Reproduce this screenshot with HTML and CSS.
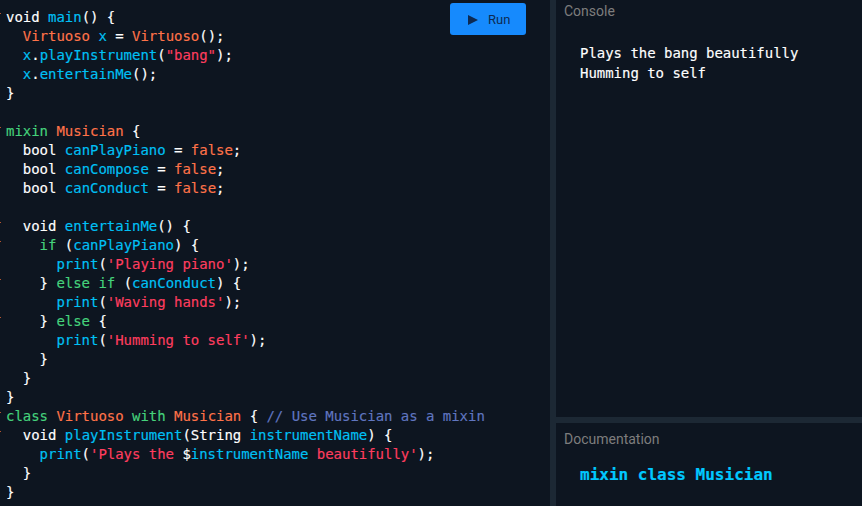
FILE: index.html
```html
<!DOCTYPE html>
<html lang="en">
<head>
<meta charset="utf-8">
<title>DartPad</title>
<link rel="stylesheet" href="styles.css">
</head>
<body>
<main class="app">
<section class="editor">
<button class="run" type="button"><svg class="run-icon" viewBox="0 0 10 10" width="10" height="10"><path d="M0 0L10 5L0 10Z"/></svg><span>Run</span></button>
<pre class="code"><code><span class="tick"></span><span class="w">void</span> <span class="f">main</span><span class="w">() {</span>
  <span class="t">Virtuoso</span> <span class="f">x</span> <span class="w">=</span> <span class="t">Virtuoso</span><span class="w">();</span>
  <span class="f">x</span><span class="w">.</span><span class="f">playInstrument</span><span class="w">(</span><span class="s">"bang"</span><span class="w">);</span>
  <span class="f">x</span><span class="w">.</span><span class="f">entertainMe</span><span class="w">();</span>
<span class="w">}</span>

<span class="tick"></span><span class="k">mixin</span> <span class="t">Musician</span> <span class="w">{</span>
  <span class="w">bool</span> <span class="f">canPlayPiano</span> <span class="w">=</span> <span class="t">false</span><span class="w">;</span>
  <span class="w">bool</span> <span class="f">canCompose</span> <span class="w">=</span> <span class="t">false</span><span class="w">;</span>
  <span class="w">bool</span> <span class="f">canConduct</span> <span class="w">=</span> <span class="t">false</span><span class="w">;</span>

<span class="tick"></span>  <span class="w">void</span> <span class="f">entertainMe</span><span class="w">() {</span>
<span class="tick"></span>    <span class="k">if</span> <span class="w">(</span><span class="f">canPlayPiano</span><span class="w">) {</span>
      <span class="f">print</span><span class="w">(</span><span class="s">'Playing piano'</span><span class="w">);</span>
<span class="tick"></span>    <span class="w">}</span> <span class="k">else if</span> <span class="w">(</span><span class="f">canConduct</span><span class="w">) {</span>
      <span class="f">print</span><span class="w">(</span><span class="s">'Waving hands'</span><span class="w">);</span>
<span class="tick"></span>    <span class="w">}</span> <span class="k">else</span> <span class="w">{</span>
      <span class="f">print</span><span class="w">(</span><span class="s">'Humming to self'</span><span class="w">);</span>
    <span class="w">}</span>
  <span class="w">}</span>
<span class="w">}</span>
<span class="tick"></span><span class="k">class</span> <span class="t">Virtuoso</span> <span class="k">with</span> <span class="t">Musician</span> <span class="w">{</span> <span class="c">// Use Musician as a mixin</span>
<span class="tick"></span>  <span class="w">void</span> <span class="f">playInstrument</span><span class="w">(String</span> <span class="f">instrumentName</span><span class="w">) {</span>
    <span class="f">print</span><span class="w">(</span><span class="s">'Plays the </span><span class="w">$</span><span class="f">instrumentName</span> <span class="s">beautifully'</span><span class="w">);</span>
  <span class="w">}</span>
<span class="w">}</span></code></pre>
</section>
<div class="vsplit"></div>
<aside class="side">
<section class="console">
<h2 class="label">Console</h2>
<pre class="output">Plays the bang beautifully
Humming to self</pre>
</section>
<div class="hsplit"></div>
<section class="docs">
<h2 class="label">Documentation</h2>
<h3 class="doc-title">mixin class Musician</h3>
</section>
</aside>
</main>
</body>
</html>
```
FILE: styles.css
```css
html, body { margin: 0; height: 100%; background: #0d1520; overflow: hidden; }
.app { display: flex; width: 862px; height: 506px; background: #0d1520; }
.editor { position: relative; width: 550px; flex: none; overflow: hidden; }
.code { margin: 0; padding: 8px 0 0 6px; font: 14px/19px "DejaVu Sans Mono", monospace; letter-spacing: -0.03px; color: #fff; -webkit-text-stroke: 0.15px; }
.code code { font: inherit; }
.tick { position: absolute; left: 0; width: 1px; height: 1px; margin-top: 5px; background: #b4552f; }
.w { color: #fff; }
.f { color: #00c0f5; }
.t { color: #ff7349; }
.k { color: #45d27c; }
.s { color: #ff3d5f; }
.c { color: #6076c0; }
.run { position: absolute; top: 3px; left: 450px; width: 76px; height: 32px; display: flex; align-items: center; padding: 1px 0 0 18px; gap: 10px; background: #168afd; border: 0; border-radius: 3px; color: #0d2a52; font: 13px "Roboto", sans-serif; }
.run-icon { fill: #0d2a52; }
.vsplit { width: 6px; flex: none; background: #1c2834; }
.side { flex: 1; display: flex; flex-direction: column; min-width: 0; }
.console { flex: 1; min-height: 0; }
.hsplit { height: 6px; flex: none; background: #1c2834; }
.docs { height: 83px; flex: none; padding-top: 5px; box-sizing: border-box; }
.label { margin: 0; padding: 2px 0 0 8px; font: 400 14px/18px "Roboto", sans-serif; color: #7d7d7d; }
.output { margin: 23px 0 0 24px; font: 14px/20px "DejaVu Sans Mono", monospace; letter-spacing: -0.03px; color: #fff; -webkit-text-stroke: 0.15px; }
.doc-title { margin: 17px 0 0 24px; font: 700 16px/20px "DejaVu Sans Mono", monospace; color: #00c8ff; -webkit-text-stroke: 0.2px; }
```
